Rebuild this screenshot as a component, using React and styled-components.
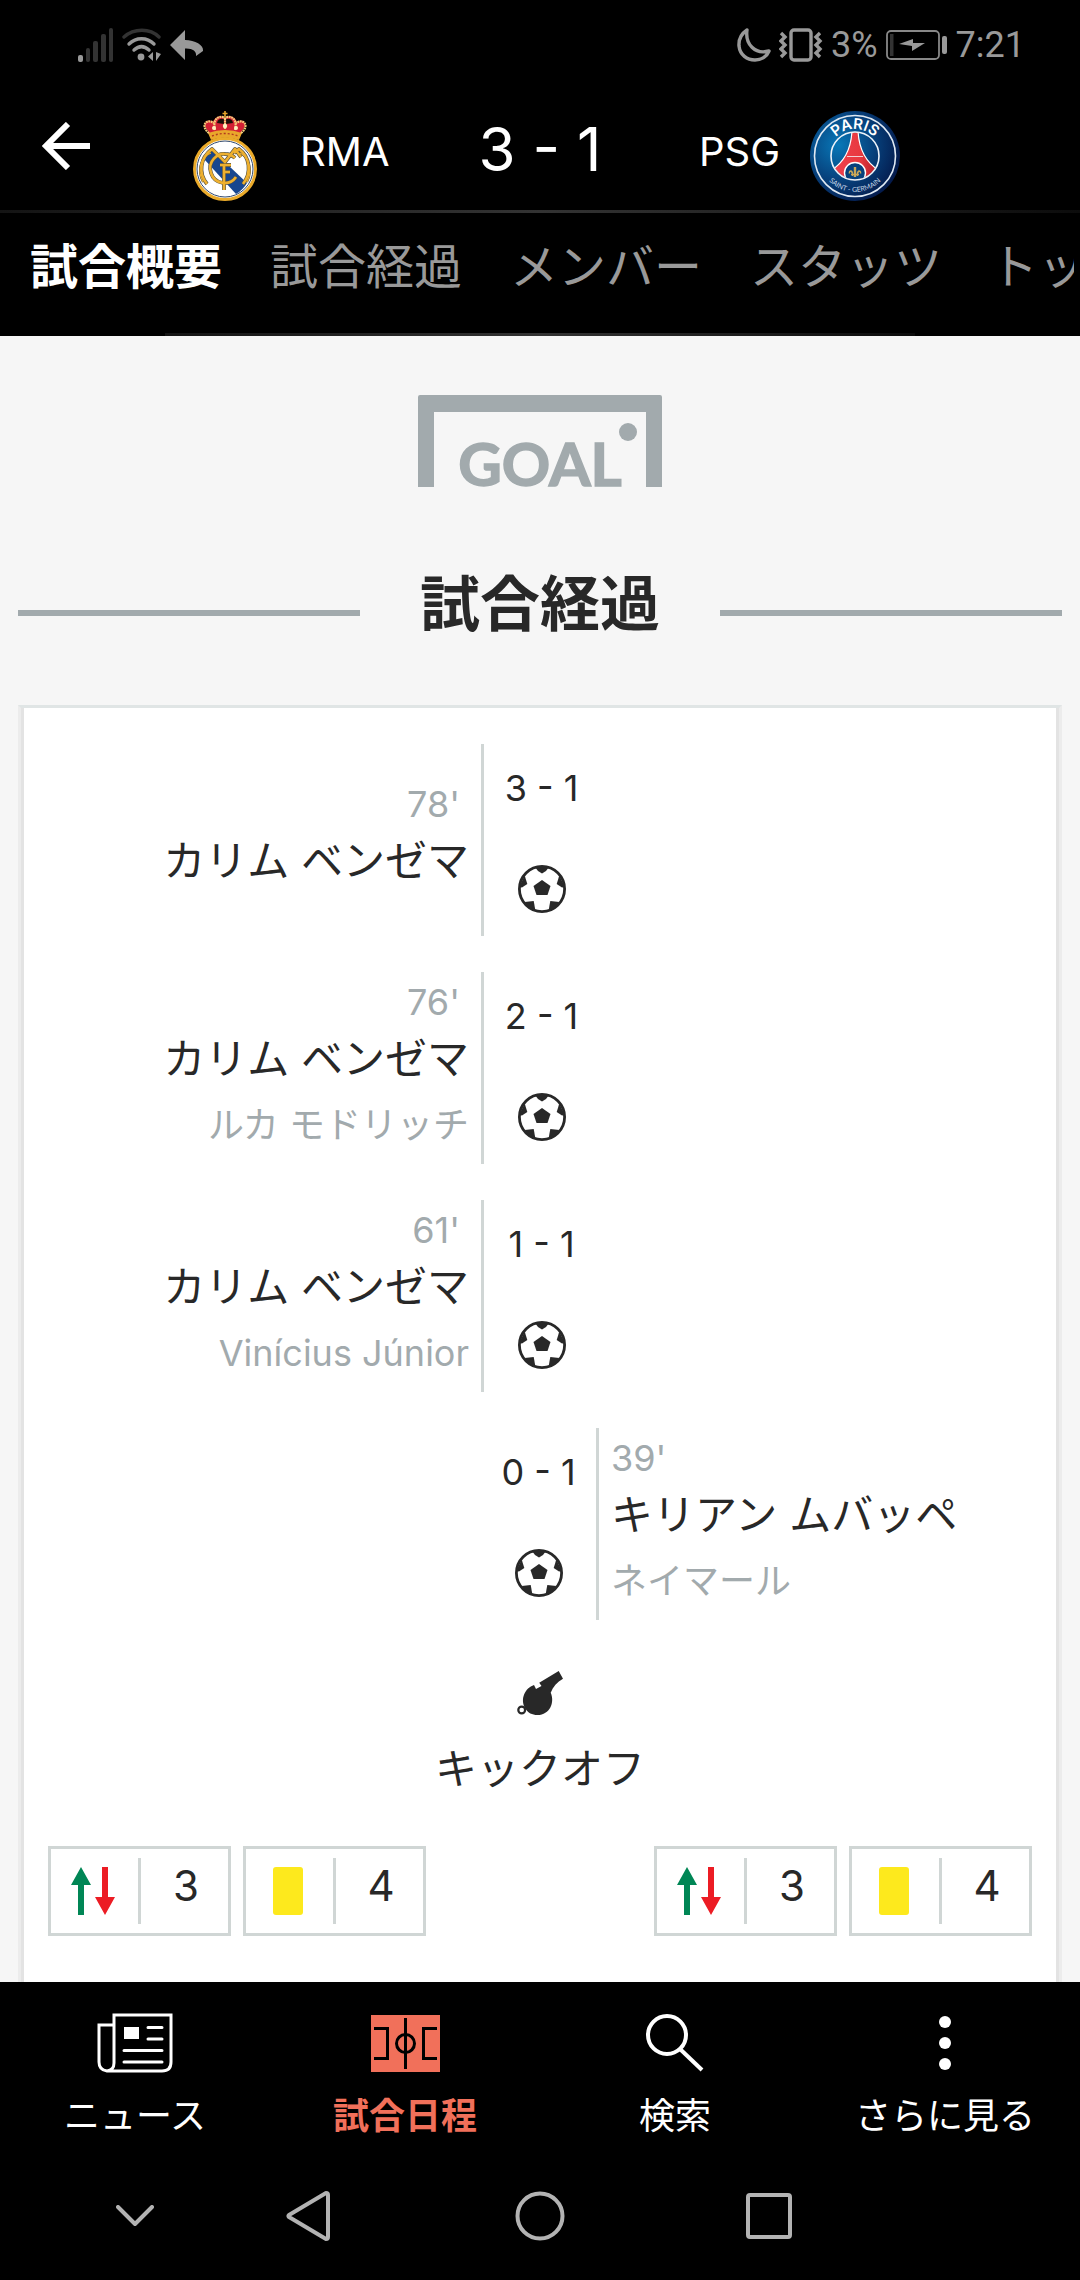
import React from "react";
import styled, { createGlobalStyle } from "styled-components";

const ink = "#282828";
const muted = "#a2aaad";
const rule = "#d0d6d5";
const accent = "#f1705a";

const GlobalStyle = createGlobalStyle`
  *, *::before, *::after { box-sizing: border-box; }
  body {
    margin: 0;
    background: #000;
    color: ${ink};
    font-family: Inter, "Noto Sans CJK JP", sans-serif;
  }
  svg { display: block; flex: none; }
  a { color: inherit; text-decoration: none; }
  button { padding: 0; border: 0; background: none; color: inherit; font: inherit; cursor: pointer; }
  h2, p, ol, ul { margin: 0; padding: 0; list-style: none; }
`;

const Page = styled.div`
  display: flex;
  flex-direction: column;
  min-height: 100vh;
`;

const TopBar = styled.header`
  background: #000;
  color: #fff;
`;

const StatusBar = styled.div`
  display: flex;
  justify-content: space-between;
  align-items: center;
  height: 90px;
  padding: 0 55px 0 78px;
  color: #999;
  font: 400 36px/48px Roboto, sans-serif;
`;

const StatusGroup = styled.div`
  display: flex;
  align-items: center;
  gap: 8px;
`;

const MatchHeader = styled.div`
  display: grid;
  grid-template-columns: 180px 90px 1fr auto 1fr 90px 180px;
  align-items: center;
  height: 120px;
  padding-bottom: 9px;
`;

const BackButton = styled.button`
  width: 48px;
  height: 48px;
  margin-left: 42px;
`;

const Crest = styled.div`
  display: flex;
  justify-content: center;
  align-self: end;
`;

const TeamName = styled.span`
  padding: 12px 30px 0;
  font-size: 40px;
  line-height: 48px;
  text-align: ${(p) => p.$align};
`;

const BigScore = styled.span`
  padding-top: 6px;
  font-size: 60px;
  line-height: 72px;
`;

const GlowLine = styled.div`
  height: 3px;
  margin: 0 ${(p) => p.$inset || "0"};
  background: linear-gradient(90deg, #141414, #333 50%, #0c0c0c);
`;

const TabList = styled.nav`
  display: flex;
  align-items: center;
  gap: 48px;
  height: 120px;
  margin-right: 6px;
  padding: 0 0 12px 30px;
  overflow: hidden;
  font-size: 48px;
  line-height: 72px;
  white-space: nowrap;
`;

const Tab = styled.a`
  flex: none;
  color: ${(p) => (p.$active ? "#fff" : "#999")};
  font-weight: ${(p) => (p.$active ? 700 : 400)};
`;

const Content = styled.main`
  display: flex;
  flex: 1;
  flex-direction: column;
  padding: 59px 18px 0;
  background: #f6f6f6;
`;

const LogoRow = styled.div`
  display: flex;
  justify-content: center;
  margin-bottom: 72px;
`;

const SectionTitle = styled.div`
  display: grid;
  grid-template-columns: 1fr 360px 1fr;
  align-items: center;
  margin-bottom: 38px;
  &::before, &::after {
    content: "";
    height: 6px;
    background: ${muted};
  }
`;

const Heading = styled.h2`
  padding-bottom: 18px;
  font-size: 60px;
  font-weight: 700;
  line-height: 90px;
  text-align: center;
`;

const Card = styled.section`
  flex: 1;
  padding: 36px 3px 46px;
  border: 3px solid #ececec;
  border-top-color: #e0e5e5;
  border-bottom: 0;
  background: #fff;
  box-shadow: inset 3px 0 #e3e3e3, inset -3px 0 #e3e3e3;
`;

const Events = styled.ol`
  display: flex;
  flex-direction: column;
  gap: 36px;
`;

const EventRow = styled.li`
  display: grid;
  grid-template-columns: 1fr 118px 1fr;
  min-height: 192px;
`;

const EventScore = styled.div`
  display: flex;
  flex-direction: column;
  align-items: center;
  gap: 53px;
  grid-column: 2;
  grid-row: 1;
  padding-top: 20px;
  border: 0 solid ${rule};
  border-width: ${(p) => (p.$side === "home" ? "0 0 0 3px" : "0 3px 0 0")};
  font-size: 36px;
  line-height: 48px;
`;

const EventDetail = styled.div`
  display: flex;
  flex-direction: column;
  justify-content: center;
  grid-column: ${(p) => (p.$side === "home" ? 1 : 3)};
  grid-row: 1;
  padding: 0 12px;
  text-align: ${(p) => (p.$side === "home" ? "right" : "left")};
`;

const Minute = styled.span`
  padding-right: 9px;
  color: ${muted};
  font-size: 36px;
  line-height: 42px;
`;

const Scorer = styled.span`
  font-size: 42px;
  line-height: 72px;
`;

const Assist = styled.span`
  color: ${muted};
  font-size: 36px;
  line-height: 60px;
`;

const KickOff = styled.div`
  display: flex;
  flex-direction: column;
  align-items: center;
  gap: 24px;
  padding: 51px 0 47px;
  font-size: 42px;
  line-height: 60px;
`;

const Totals = styled.div`
  display: flex;
  justify-content: space-between;
  padding: 0 24px;
`;

const TeamTotals = styled.ul`
  display: flex;
  gap: 12px;
`;

const TotalBox = styled.li`
  display: grid;
  grid-template-columns: 1fr 3px 1fr;
  align-items: center;
  justify-items: center;
  width: 183px;
  height: 90px;
  border: 3px solid ${rule};
  font-size: 42px;
  line-height: 48px;
  &::before {
    content: "";
    grid-column: 2;
    grid-row: 1;
    width: 3px;
    height: 66px;
    background: ${rule};
  }
`;

const TotalIcon = styled.span`
  grid-column: 1;
  grid-row: 1;
  padding-right: 3px;
`;

const TotalCount = styled.span`
  grid-column: 3;
  grid-row: 1;
  padding: 0 0 10px 3px;
`;

const YellowCard = styled.span`
  display: block;
  width: 30px;
  height: 48px;
  border-radius: 3px;
  background: #fde91d;
`;

const BottomBar = styled.footer`
  background: #000;
  color: #fff;
`;

const AppNav = styled.nav`
  display: grid;
  grid-template-columns: repeat(4, 1fr);
  padding: 31px 0 51px;
`;

const NavLink = styled.a`
  display: flex;
  flex-direction: column;
  align-items: center;
  gap: 19px;
  color: ${(p) => (p.$active ? accent : "#fff")};
  font-size: 36px;
  font-weight: ${(p) => (p.$active ? 700 : 400)};
  line-height: 48px;
`;

const NavIcon = styled.span`
  display: flex;
  align-items: center;
  height: 60px;
`;

const SystemNav = styled.div`
  display: grid;
  grid-template-columns: 270fr 76fr 388fr 70fr 276fr;
  align-items: center;
  justify-items: center;
  height: 48px;
  margin-bottom: 41px;
`;

const SignalIcon = () => (
  <svg width="36" height="34" viewBox="0 0 36 34" fill="#333">
    <rect x="0" y="27" width="5" height="7" rx="2" fill="#999" />
    <rect x="8" y="20" width="4" height="14" rx="2" />
    <rect x="15" y="13" width="5" height="21" rx="2" />
    <rect x="23" y="6" width="5" height="28" rx="2" />
    <rect x="31" y="0" width="4" height="34" rx="2" />
  </svg>
);

const WifiIcon = () => (
  <svg width="40" height="34" viewBox="0 0 40 34" fill="none" strokeWidth="3.4" strokeLinecap="round">
    <path d="M2 9 C12 0 28 0 37 9" stroke="#333" />
    <path d="M7 16 C14 9 25 9 32 16" stroke="#999" />
    <path d="M12 22 C17 17.5 22 17.5 27 22" stroke="#999" />
    <circle cx="19" cy="29" r="3.4" fill="#999" />
    <path d="M31 24 v9 l-5 -4.5z M34 24 v9 l5 -7z" fill="#999" />
  </svg>
);

const ReplyIcon = () => (
  <svg width="34" height="30" viewBox="0 0 34 30" fill="#999">
    <path d="M0 15 L15 0 V10 C25 10 34 15 33 21 L26 26 C27 21 22 18 15 18.500 V30z" />
  </svg>
);

const MoonIcon = () => (
  <svg width="34" height="34" viewBox="0 0 34 34" fill="none" stroke="#999" strokeWidth="3.4" strokeLinejoin="round">
    <path d="M10 2 C4 6 1.500 11 2 18 C3 27 10 32 18 32 C25 32 30 28 32 23 C18 27 8 16 10 2z" />
  </svg>
);

const VibrateIcon = () => (
  <svg width="44" height="34" viewBox="0 0 44 34" fill="none" stroke="#999" strokeWidth="3.4">
    <rect x="12" y="2" width="20" height="30" rx="3" />
    <path d="M2 5 l4 4 -4 4 4 4 -4 4 4 4 -4 4 M41 5 l-4 4 4 4 -4 4 4 4 -4 4 4 4" />
  </svg>
);

const BatteryIcon = () => (
  <svg width="62" height="30" viewBox="0 0 62 30" fill="none">
    <rect x="1" y="1" width="52" height="28" rx="4" stroke="#888" strokeWidth="1.800" />
    <rect x="4" y="4" width="3.500" height="22" fill="#333" />
    <rect x="56" y="6" width="5" height="18" rx="2" fill="#999" />
    <path d="M13 14 L27 9 V13 H39 L26 21 V16z" fill="#999" />
  </svg>
);

const ArrowLeftIcon = () => (
  <svg width="48" height="48" viewBox="0 0 48 48" fill="none" stroke="#fff" strokeWidth="6">
    <path d="M48 24 H5 M26 2 L4 24 L26 46" />
  </svg>
);

const MadridCrest = () => (
  <svg width="64" height="90" viewBox="0 0 64 90" role="img" aria-label="Real Madrid">
    <path d="M15 20 C8 12 14 7 20 11 C22 5 29 4 32 7 C35 4 42 5 44 11 C50 7 56 12 49 20 L46 26 H18z" fill="#d32034" />
    <path d="M24 12 Q25 7 31 8 V13z M40 12 Q39 7 33 8 V13z" fill="#1a0d08" />
    <path d="M15 22 Q32 16 49 22 L46 29 Q32 24 18 29z" fill="#e9a72b" />
    <path d="M19 25 Q32 20 45 25" fill="none" stroke="#b33a1e" strokeWidth="1.400" strokeDasharray="2 2" />
    <g fill="none" stroke="#f5cf7a" strokeWidth="2.200" strokeDasharray="1.900 .6">
      <path d="M16 22 C7 15 13 7 21 12" />
      <path d="M22 19 C19 7 27 4 32 7" />
      <path d="M48 22 C57 15 51 7 43 12" />
      <path d="M42 19 C45 7 37 4 32 7" />
      <path d="M32 7 V18" />
    </g>
    <path d="M32 0 V6 M29.500 2.500 H34.500" stroke="#e3a52a" strokeWidth="1.600" />
    <g fill="#fff0c0">
      <circle cx="21" cy="17" r="2" />
      <circle cx="32" cy="15" r="2.200" />
      <circle cx="43" cy="17" r="2" />
    </g>
    <circle cx="32" cy="58" r="30.500" fill="#fff" stroke="#eaaa2a" strokeWidth="3" />
    <circle cx="32" cy="58" r="28" fill="none" stroke="#324b70" strokeWidth="1" />
    <path d="M11 48 L18 38 L54 72 Q50 79 43 83z" fill="#17468f" />
    <g fill="none" strokeLinejoin="round">
      {["#54503f", "#eeb02f"].map((color, i) => (
        <g key={color} stroke={color} strokeWidth={i ? 2.6 : 3.8}>
          <path d="M14 73 C5 62 7 47 19 38 L32 51 L42 38 L48 46 M41 42 L46 38 C57 46 59 62 50 73" />
          <path d="M10 71 C3 58 9 45 18 42 M54 71 C61 58 54 45 47 42" strokeWidth={i ? 1.2 : 2} />
          <path d="M43 66 C37 75 22 74 18 62 C14 50 25 42 32 43 C37 43 40 45 42 47" />
          <path d="M27 54 H38 M31 79 V54 M31 61 H37" />
        </g>
      ))}
    </g>
  </svg>
);

const ParisCrest = () => (
  <svg width="90" height="90" viewBox="0 0 90 90" role="img" aria-label="Paris Saint-Germain">
    <defs>
      <radialGradient id="parisBlue" cx="32%" cy="38%" r="70%">
        <stop offset="0" stopColor="#0878b8" />
        <stop offset=".55" stopColor="#07427d" />
        <stop offset="1" stopColor="#041b4d" />
      </radialGradient>
      <linearGradient id="towerRed" x1="0" x2="1">
        <stop offset="0" stopColor="#f0424f" />
        <stop offset=".6" stopColor="#e83a40" />
        <stop offset="1" stopColor="#a81824" />
      </linearGradient>
      <clipPath id="innerDisc"><circle cx="45" cy="45" r="23.500" /></clipPath>
      <path id="upperArc" d="M18 45 A27 27 0 0 1 72 45" />
      <path id="lowerArc" d="M9 45 A36 36 0 0 0 81 45" />
    </defs>
    <circle cx="45" cy="45" r="45" fill="url(#parisBlue)" />
    <circle cx="45" cy="45" r="40.500" fill="none" stroke="#dfe9f3" strokeWidth="1.600" />
    <g clipPath="url(#innerDisc)">
      <path d="M42 20 H48 C49 38 56 52 70 60 L62 70 H28 L20 60 C34 52 41 38 42 20z" fill="url(#towerRed)" stroke="#fff" strokeWidth="1.200" />
      <path d="M37 45.500 H53" stroke="#f3cfd4" strokeWidth="1.200" />
      <circle cx="45" cy="62" r="10.500" fill="#07417c" stroke="#fff" strokeWidth="1.400" />
    </g>
    <circle cx="45" cy="45" r="24" fill="none" stroke="#eef4fa" strokeWidth="1.600" />
    <g fill="none" stroke="#c9a758" strokeWidth="1.400">
      <path d="M45 56 V66" strokeWidth="2.400" />
      <path d="M42.500 65 Q43 61 41 60 Q39 60 39.500 62.500 M47.500 65 Q47 61 49 60 Q51 60 50.500 62.500 M41 63.500 H49" />
    </g>
    <g fill="#fff" textAnchor="middle">
      <text fontSize="15" fontWeight="600" fontFamily="Inter, sans-serif"><textPath href="#upperArc" startOffset="50%">PARIS</textPath></text>
      <text fontSize="7" fontFamily="Lato, sans-serif" fill="#c7d8e8"><textPath href="#lowerArc" startOffset="50%">SAINT - GERMAIN</textPath></text>
    </g>
  </svg>
);

const GoalLogo = () => (
  <svg width="244" height="92" viewBox="0 0 244 92" fill={muted} overflow="visible" role="img" aria-label="GOAL">
    <path d="M0 92 V2 Q0 0 2 0 H242 Q244 0 244 2 V92 H228 V17 H16 V92z" />
    <circle cx="210" cy="37" r="9" />
    <text x="122" y="91" fontFamily="Lato, sans-serif" fontSize="60" fontWeight="700" stroke={muted} strokeWidth="1.500" textAnchor="middle">GOAL</text>
  </svg>
);

const BallIcon = () => (
  <svg width="48" height="48" viewBox="0 0 48 48" fill={ink} role="img" aria-label="ゴール">
    <circle cx="24" cy="24" r="22.600" fill="#fff" stroke={ink} strokeWidth="2.800" />
    <path d="M24 15 L32.500 21 L29.500 30 H18.500 L15.500 21z" />
    <path d="M17 2 H31 L28 6 L24 8.500 L20 6z" />
    <path d="M6.700 10.500 L1 22 L4 22.500 L9.300 19z" />
    <path d="M41.300 10.500 L47 22 L44 22.500 L38.700 19z" />
    <path d="M6.700 37 L15.700 36 L17.300 45 L11 43z" />
    <path d="M41.300 37 L32.300 36 L30.700 45 L37 43z" />
  </svg>
);

const WhistleIcon = () => (
  <svg width="46" height="44" viewBox="0 0 46 44" fill={ink}>
    <path d="M41.700 0 L46 7.700 C40 11 36 16 33.700 21.700 C38 31 33 44 20.500 44 C15 44 11 42 8 37 C3 28 8 17 17 14 L19 18 L24.500 15 L22.200 11.700z" />
    <circle cx="4.700" cy="39" r="3.400" fill="none" stroke={ink} strokeWidth="2.200" />
  </svg>
);

const SubstitutionIcon = () => (
  <svg width="44" height="48" viewBox="0 0 44 48">
    <path d="M10 0 L20 18 H13 V48 H7 V18 H0z" fill="#008655" />
    <path d="M31 0 H37 V30 H44 L34 48 L24 30 H31z" fill="#ec1c24" />
  </svg>
);

const NewsIcon = () => (
  <svg width="76" height="60" viewBox="0 0 76 60" fill="none" stroke="#fff" strokeWidth="3" strokeLinecap="round">
    <path d="M17 50 V2 H74 V49 Q74 58 65 58 H10 Q2 57 2 49 V12 H17 M17 50 Q17 57 10 58" />
    <rect x="27" y="14" width="15" height="12" fill="#fff" stroke="none" />
    <path d="M51 14.500 H65 M51 26 H65 M27 37.500 H65 M27 49 H65" />
  </svg>
);

const PitchIcon = () => (
  <svg width="69" height="57" viewBox="0 0 69 57" fill="none" stroke="#000" strokeWidth="3">
    <rect width="69" height="57" fill={accent} stroke="none" />
    <path d="M34.500 3 V54 M3 13.500 H16.500 V43.500 H3 M66 13.500 H52.500 V43.500 H66" />
    <circle cx="34.500" cy="28.500" r="9" />
  </svg>
);

const SearchIcon = () => (
  <svg width="58" height="58" viewBox="0 0 58 58" fill="none" stroke="#fff" strokeWidth="4">
    <circle cx="21" cy="21" r="19" />
    <path d="M34 35 L56 56" />
  </svg>
);

const MoreIcon = () => (
  <svg width="12" height="56" viewBox="0 0 12 56" fill="#fff">
    <circle cx="6" cy="7" r="6" />
    <circle cx="6" cy="28" r="6" />
    <circle cx="6" cy="49" r="6" />
  </svg>
);

const systemIcon = { fill: "none", stroke: "#b3b3b3", strokeWidth: 4, strokeLinecap: "round", strokeLinejoin: "round" };

const tabs = ["試合概要", "試合経過", "メンバー", "スタッツ", "トップ"];

const events = [
  { side: "home", minute: "78'", scorer: "カリム ベンゼマ", score: "3 - 1" },
  { side: "home", minute: "76'", scorer: "カリム ベンゼマ", assist: "ルカ モドリッチ", score: "2 - 1" },
  { side: "home", minute: "61'", scorer: "カリム ベンゼマ", assist: "Vinícius Júnior", score: "1 - 1" },
  { side: "away", minute: "39'", scorer: "キリアン ムバッペ", assist: "ネイマール", score: "0 - 1" },
];

const navItems = [
  { label: "ニュース", Icon: NewsIcon },
  { label: "試合日程", Icon: PitchIcon, active: true },
  { label: "検索", Icon: SearchIcon },
  { label: "さらに見る", Icon: MoreIcon },
];

const totals = [
  { team: "RMA", substitutions: 3, yellowCards: 4 },
  { team: "PSG", substitutions: 3, yellowCards: 4 },
];

export default function App() {
  return (
    <Page>
      <GlobalStyle />
      <TopBar>
        <StatusBar>
          <StatusGroup>
            <SignalIcon />
            <WifiIcon />
            <ReplyIcon />
          </StatusGroup>
          <StatusGroup>
            <MoonIcon />
            <VibrateIcon />
            <span>3%</span>
            <BatteryIcon />
            <span>7:21</span>
          </StatusGroup>
        </StatusBar>
        <MatchHeader>
          <BackButton aria-label="戻る"><ArrowLeftIcon /></BackButton>
          <Crest><MadridCrest /></Crest>
          <TeamName $align="left">RMA</TeamName>
          <BigScore>3 - 1</BigScore>
          <TeamName $align="right">PSG</TeamName>
          <Crest><ParisCrest /></Crest>
        </MatchHeader>
        <GlowLine />
        <TabList>
          {tabs.map((tab, i) => (
            <Tab key={tab} href="#" $active={i === 0}>{tab}</Tab>
          ))}
        </TabList>
        <GlowLine $inset="165px" />
      </TopBar>

      <Content>
        <LogoRow><GoalLogo /></LogoRow>
        <SectionTitle><Heading>試合経過</Heading></SectionTitle>
        <Card>
          <Events>
            {events.map((event) => (
              <EventRow key={event.minute}>
                <EventDetail $side={event.side}>
                  <Minute>{event.minute}</Minute>
                  <Scorer>{event.scorer}</Scorer>
                  {event.assist && <Assist>{event.assist}</Assist>}
                </EventDetail>
                <EventScore $side={event.side}>
                  <span>{event.score}</span>
                  <BallIcon />
                </EventScore>
              </EventRow>
            ))}
          </Events>
          <KickOff>
            <WhistleIcon />
            <p>キックオフ</p>
          </KickOff>
          <Totals>
            {totals.map((total) => (
              <TeamTotals key={total.team}>
                <TotalBox>
                  <TotalIcon><SubstitutionIcon /></TotalIcon>
                  <TotalCount>{total.substitutions}</TotalCount>
                </TotalBox>
                <TotalBox>
                  <TotalIcon><YellowCard /></TotalIcon>
                  <TotalCount>{total.yellowCards}</TotalCount>
                </TotalBox>
              </TeamTotals>
            ))}
          </Totals>
        </Card>
      </Content>

      <BottomBar>
        <AppNav>
          {navItems.map(({ label, Icon, active }) => (
            <NavLink key={label} href="#" $active={active}>
              <NavIcon><Icon /></NavIcon>
              {label}
            </NavLink>
          ))}
        </AppNav>
        <SystemNav>
          <button aria-label="閉じる">
            <svg width="38" height="22" viewBox="0 0 38 22" {...systemIcon}><path d="M2 2 L19 19 L36 2" /></svg>
          </button>
          <button aria-label="前へ">
            <svg width="44" height="50" viewBox="0 0 44 50" {...systemIcon}><path d="M40 2 Q42 2 42 4 V46 Q42 48 40 48 L3 26 Q2 25 3 24z" /></svg>
          </button>
          <button aria-label="ホーム">
            <svg width="50" height="50" viewBox="0 0 50 50" {...systemIcon}><circle cx="25" cy="25" r="22.500" /></svg>
          </button>
          <button aria-label="アプリ一覧">
            <svg width="46" height="46" viewBox="0 0 46 46" {...systemIcon}><rect x="2" y="2" width="42" height="42" rx="2" /></svg>
          </button>
        </SystemNav>
      </BottomBar>
    </Page>
  );
}
